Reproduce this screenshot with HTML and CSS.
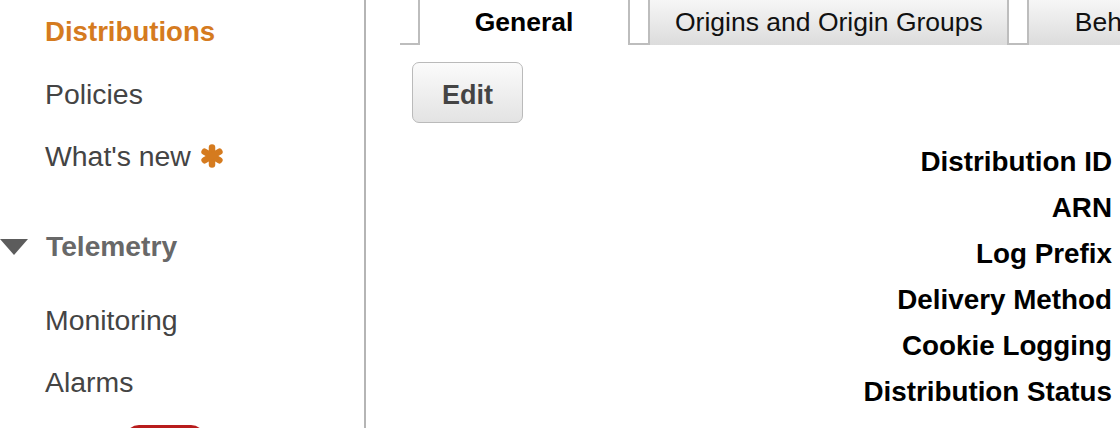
FILE: index.html
```html
<!DOCTYPE html>
<html>
<head>
<meta charset="utf-8">
<link rel="stylesheet" href="styles.css">
</head>
<body>
<div class="page">
  <nav class="sidebar">
    <ul class="nav-list">
      <li class="nav-item active">Distributions</li>
      <li class="nav-item">Policies</li>
      <li class="nav-item">What's new
        <svg class="star" width="24" height="24" viewBox="0 0 24 24"><g stroke="#d57b1f" stroke-width="6.5" stroke-linecap="round"><line x1="12" y1="3.5" x2="12" y2="20.5"/><line x1="4.6" y1="7.75" x2="19.4" y2="16.25"/><line x1="4.6" y1="16.25" x2="19.4" y2="7.75"/></g></svg>
      </li>
      <li class="nav-section"><span class="caret"></span>Telemetry</li>
      <li class="nav-item first-sub">Monitoring</li>
      <li class="nav-item">Alarms</li>
      <li class="nav-item badge-row"><span class="badge"></span></li>
    </ul>
  </nav>
  <main class="main">
    <div class="tabs">
      <div class="tab-gap lead"></div>
      <div class="tab active">General</div>
      <div class="tab-gap"></div>
      <div class="tab">Origins and Origin Groups</div>
      <div class="tab-gap"></div>
      <div class="tab wide">Behaviors</div>
    </div>
    <div class="toolbar">
      <button class="btn">Edit</button>
    </div>
    <dl class="details">
      <dt>Distribution ID</dt>
      <dt>ARN</dt>
      <dt>Log Prefix</dt>
      <dt>Delivery Method</dt>
      <dt>Cookie Logging</dt>
      <dt>Distribution Status</dt>
      <dt>Comment</dt>
    </dl>
  </main>
</div>
</body>
</html>
```

FILE: styles.css
```css
html, body {
  margin: 0;
  padding: 0;
  background: #fff;
  font-family: "Liberation Sans", Arial, Helvetica, sans-serif;
  overflow: hidden;
}
.page {
  display: flex;
  width: 1120px;
  height: 428px;
  overflow: hidden;
}
.sidebar {
  width: 364px;
  flex: none;
  border-right: 2px solid #b5b5b5;
  height: 428px;
  overflow: hidden;
}
.nav-list {
  list-style: none;
  margin: 0;
  padding: 1px 0 0 0;
}
.nav-item {
  height: 62px;
  line-height: 62px;
  padding-left: 45px;
  font-size: 28.4px;
  color: #444;
  display: flex;
  align-items: center;
  white-space: nowrap;
}
.nav-item.active {
  color: #d57b1f;
  font-weight: bold;
  font-size: 27.6px;
}
.star {
  margin-left: 9px;
  margin-top: -1px;
}
.nav-section {
  margin-top: 28px;
  height: 62px;
  display: flex;
  align-items: center;
  font-size: 28.2px;
  font-weight: bold;
  color: #686868;
}
.caret {
  width: 0;
  height: 0;
  border-left: 14px solid transparent;
  border-right: 14px solid transparent;
  border-top: 16px solid #5c5c5c;
  margin-right: 18px;
  margin-top: 2px;
}
.first-sub {
  margin-top: 12px;
}
.badge-row {
  height: 40px;
  align-items: flex-start;
  padding-top: 12px;
  padding-left: 125px;
}
.badge {
  display: block;
  width: 80px;
  height: 30px;
  background: #b81c1c;
  border-radius: 14px;
}
.main {
  flex: 1;
  min-width: 0;
  overflow: hidden;
  padding-left: 34px;
}
.tabs {
  display: flex;
  height: 45px;
  white-space: nowrap;
}
.tab-gap {
  flex: none;
  width: 18px;
  height: 43px;
  border: 2px solid #bdbdbd;
  border-top: none;
  background: #fff;
}
.tab-gap.lead {
  border-left: none;
  width: 18px;
}
.tab {
  flex: none;
  height: 45px;
  line-height: 44px;
  font-size: 26.5px;
  color: #111;
  padding: 0 24px 0 25px;
  background: linear-gradient(#f6f6f6, #dcdcdc);
}
.tab.wide {
  padding-left: 46px;
}
.tab.active {
  background: #fff;
  font-weight: bold;
  color: #000;
  width: 208px;
  padding: 0;
  text-align: center;
  box-sizing: border-box;
}
.toolbar {
  padding: 17px 0 0 12px;
}
.btn {
  display: block;
  width: 111px;
  height: 61px;
  border: 1.5px solid #bababa;
  border-radius: 7px;
  background: linear-gradient(#fbfbfb, #e3e3e3);
  font-family: inherit;
  font-size: 27px;
  font-weight: bold;
  color: #444;
  padding: 5px 0 0 0;
  box-sizing: border-box;
}
.details {
  margin: 16px 0 0 0;
  padding-right: 8px;
  text-align: right;
}
.details dt {
  height: 46px;
  line-height: 46px;
  font-size: 27.8px;
  font-weight: bold;
  color: #000;
  white-space: nowrap;
}
```
